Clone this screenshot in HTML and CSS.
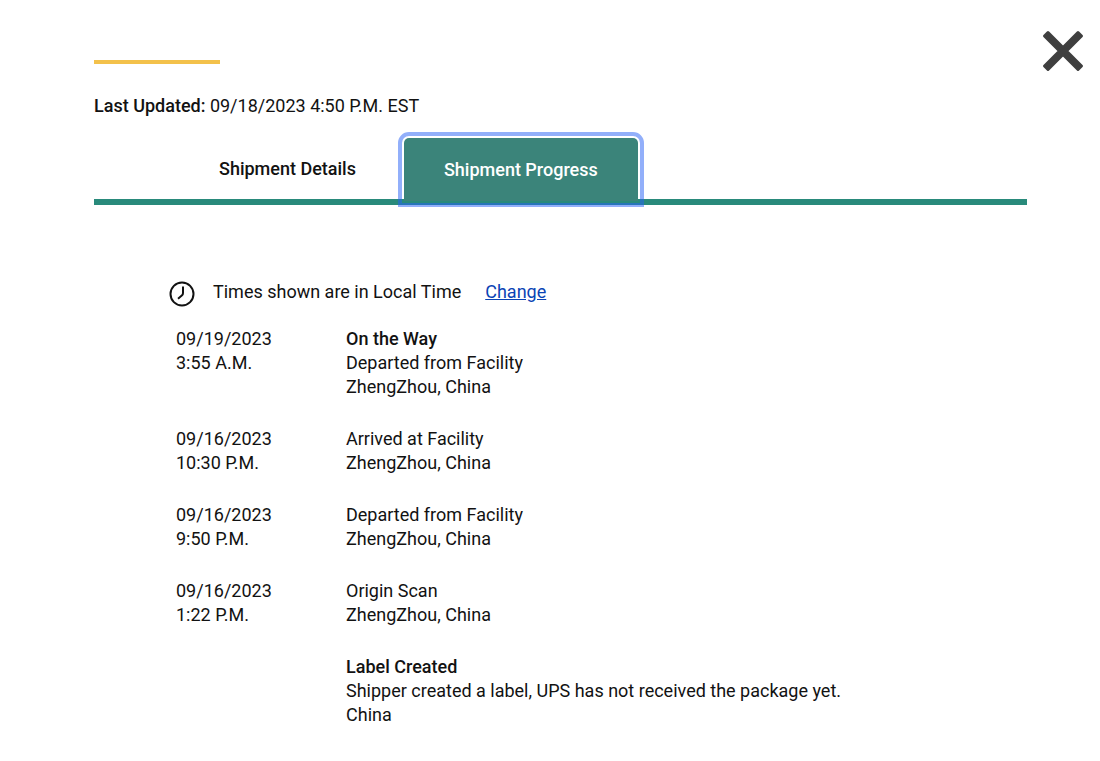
FILE: index.html
```html
<!DOCTYPE html>
<html lang="en">
<head>
<meta charset="UTF-8">
<meta name="viewport" content="width=device-width, initial-scale=1.0">
<title>Shipment Progress</title>
<link rel="stylesheet" href="styles.css">
</head>
<body>

    <button class="close" type="button" aria-label="Close">
        <svg viewBox="0 0 42 42" width="42" height="42" aria-hidden="true">
            <path d="M2.5 6 L6 2.5 L21 17.5 L36 2.5 L39.5 6 L24.5 21 L39.5 36 L36 39.5 L21 24.5 L6 39.5 L2.5 36 L17.5 21 Z" />
        </svg>
    </button>

    <main class="modal">
        <div class="accent"></div>
        <p class="updated"><strong>Last Updated:</strong> 09/18/2023 4:50 P.M. EST</p>

        <div class="tabs" role="tablist">
            <button class="tab" type="button" role="tab" aria-selected="false">Shipment Details</button>
            <button class="tab active" type="button" role="tab" aria-selected="true">Shipment Progress</button>
        </div>

        <section class="progress">
            <div class="timezone">
                <svg class="clock" viewBox="0 0 26 26" width="26" height="26" aria-hidden="true">
                    <circle cx="13" cy="13" r="11.5" />
                    <path d="M14 5.5 V12 Q14 13.6 12.8 14.6 L9 17.8" />
                </svg>
                <span>Times shown are in Local Time</span>
                <a href="#">Change</a>
            </div>

            <table class="events">
                <tr>
                    <td class="date">09/19/2023<br>3:55 A.M.</td>
                    <td><strong>On the Way</strong><br>Departed from Facility<br>ZhengZhou, China</td>
                </tr>
                <tr>
                    <td class="date">09/16/2023<br>10:30 P.M.</td>
                    <td>Arrived at Facility<br>ZhengZhou, China</td>
                </tr>
                <tr>
                    <td class="date">09/16/2023<br>9:50 P.M.</td>
                    <td>Departed from Facility<br>ZhengZhou, China</td>
                </tr>
                <tr>
                    <td class="date">09/16/2023<br>1:22 P.M.</td>
                    <td>Origin Scan<br>ZhengZhou, China</td>
                </tr>
                <tr>
                    <td class="date"></td>
                    <td><strong>Label Created</strong><br>Shipper created a label, UPS has not received the package yet.<br>China</td>
                </tr>
            </table>
        </section>
    </main>

</body>
</html>
```

FILE: styles.css
```css
body {
    margin: 0;
    background: #fff;
    color: #121212;
    font-family: Roboto, Arial, sans-serif;
    font-size: 18px;
    line-height: 24px;
}
strong {
    font-weight: 500;
}
button {
    border: 0;
    padding: 0;
    background: none;
    color: inherit;
    font-family: inherit;
    cursor: pointer;
}
.close {
    position: absolute;
    top: 30px;
    right: 16px;
}
.close svg {
    display: block;
    fill: #3f3f3f;
    stroke: #3f3f3f;
    stroke-width: 3;
    stroke-linejoin: round;
}
.modal {
    padding: 60px 73px 32px 94px;
}
.accent {
    width: 126px;
    height: 4px;
    background: #f3c14b;
}
.updated {
    margin: 30px 0 20px;
}
.tabs {
    display: flex;
    gap: 8px;
    height: 61px;
    padding-left: 85px;
    border-bottom: 6px solid #298a7b;
}
.tab {
    height: 61px;
    padding: 0 40px;
    font-size: 18px;
    font-weight: 500;
}
.tab.active {
    height: 63px;
    background: #3b847a;
    color: #fff;
    border-radius: 5px 5px 0 0;
    outline: 4px solid rgba(37, 95, 245, 0.5);
    outline-offset: 2px;
}
.progress {
    padding: 75px 0 0 75px;
}
.timezone {
    display: flex;
    gap: 18px;
}
.timezone a {
    margin-left: 6px;
    color: #0a44b5;
}
.clock {
    margin-top: 1px;
    fill: none;
    stroke: #121212;
    stroke-width: 2;
}
.events {
    margin-top: 20px;
    border-collapse: collapse;
}
.events td {
    padding: 0 0 28px;
    vertical-align: top;
}
.events .date {
    width: 170px;
    padding-left: 7px;
}
```
